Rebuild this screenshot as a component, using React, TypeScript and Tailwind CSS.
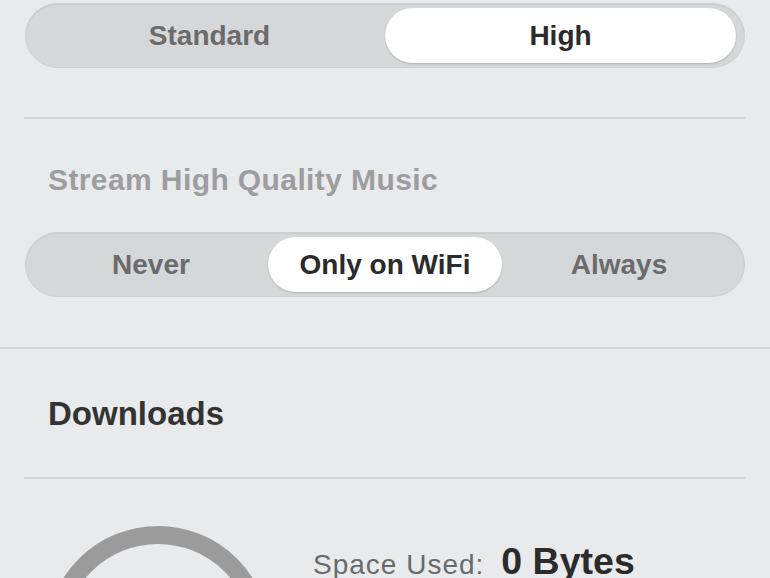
import React from "react";

function Segmented({
  items,
  selected,
  px,
}: {
  items: string[];
  selected: number;
  px: string;
}) {
  return (
    <div
      className={`flex h-[65px] rounded-full border border-[#cdced0] bg-[#d6d7d9] py-[4px] shadow-[inset_0_1px_1px_rgba(0,0,0,0.06)] ${px}`}
    >
      {items.map((t, i) => (
        <div
          key={t}
          className={
            i === selected
              ? "flex flex-1 items-center justify-center rounded-full bg-white text-[28px] font-bold text-[#2b2b2b] shadow-[0_1px_2px_rgba(0,0,0,0.18)]"
              : "flex flex-1 items-center justify-center text-[28px] font-bold text-[#6b6b6b]"
          }
        >
          {t}
        </div>
      ))}
    </div>
  );
}

export default function App() {
  return (
    <div
      className="h-[578px] w-[770px] overflow-hidden bg-[#e9eaec]"
      style={{ fontFamily: "'Liberation Sans', Arial, sans-serif" }}
    >
      <div className="ml-[25px] mr-[25px] pt-[3px]">
        <Segmented items={["Standard", "High"]} selected={1} px="px-[8px]" />
      </div>
      <div className="ml-[24px] mr-[25px] mt-[49px] h-[2px] bg-[#d3d4d6]" />
      <div className="ml-[48px] mt-[46px] text-[30px] font-bold leading-none tracking-[0.4px] text-[#9d9d9f]">
        Stream High Quality Music
      </div>
      <div className="ml-[25px] mr-[25px] mt-[37px]">
        <Segmented
          items={["Never", "Only on WiFi", "Always"]}
          selected={1}
          px="px-[8px]"
        />
      </div>
      <div className="mt-[50px] h-[2px] bg-[#d3d4d6]" />
      <div className="ml-[48px] mt-[48px] text-[33px] font-bold leading-none text-[#333333]">
        Downloads
      </div>
      <div className="ml-[24px] mr-[25px] mt-[47px] h-[2px] bg-[#d3d4d6]" />
      <div className="mt-[47px] flex">
        <div className="ml-[46px] h-[224px] w-[224px] shrink-0 rounded-full border-[18px] border-[#9b9b9b]" />
        <div className="ml-[43px] mt-[17px] flex items-baseline">
          <span className="text-[28px] leading-none tracking-[1px] text-[#6a6a6a]">
            Space Used:
          </span>
          <span className="ml-[17px] text-[37.5px] font-bold leading-none text-[#2b2b2b]">
            0 Bytes
          </span>
        </div>
      </div>
    </div>
  );
}
